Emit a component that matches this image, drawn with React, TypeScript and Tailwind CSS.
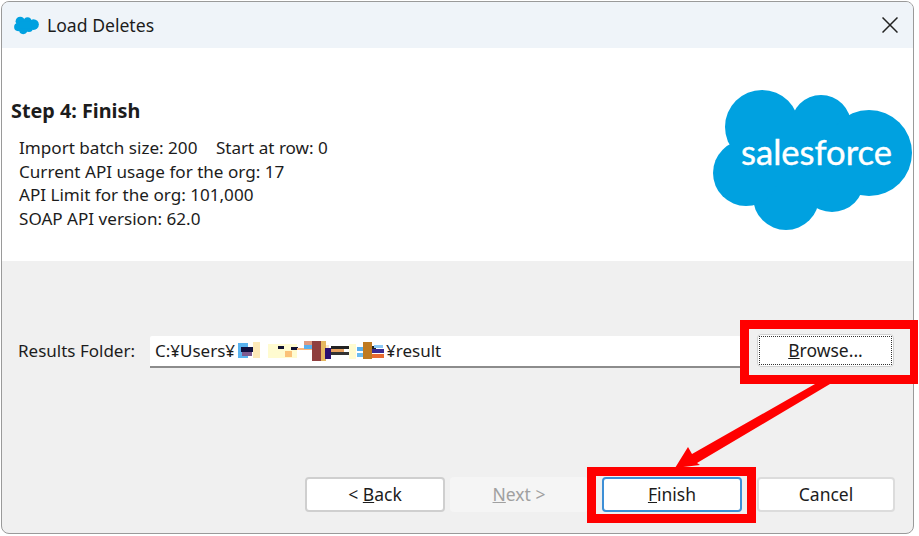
const font = { fontFamily: '"Noto Sans", "Open Sans", sans-serif' };

function Cloud({ className, children }: { className: string; children?: React.ReactNode }) {
  return (
    <svg viewBox="713 90 201 141" className={className}>
      <g fill="#00a1e0">
        <circle cx="763" cy="127" r="37" />
        <circle cx="822" cy="125" r="30" />
        <circle cx="870" cy="153" r="43" />
        <circle cx="833" cy="180" r="32" />
        <circle cx="787" cy="197" r="33" />
        <circle cx="747" cy="173" r="33" />
        <rect x="755" y="125" width="100" height="60" />
      </g>
      {children}
    </svg>
  );
}

function Btn({ children, cls }: { children: React.ReactNode; cls: string }) {
  return (
    <div className={`h-[35px] flex items-center justify-center rounded-[4px] text-[17.5px] ${cls}`}>{children}</div>
  );
}

const mosaic: [number, number, number, number, string][] = [
  [0, 3, 10, 15, "#59b3f0"], [3, 7, 12, 5, "#101040"], [15, 2, 7, 16, "#fde9b8"], [4, 12, 10, 4, "#7c5a90"],
  [30, 4, 29, 14, "#fffbd0"], [40, 6, 6, 3, "#101030"], [47, 11, 7, 6, "#fbc27a"], [53, 7, 7, 3, "#101030"], [59, 8, 15, 2, "#fbb87c"],
  [66, 1, 20, 4, "#e09a80"], [66, 5, 8, 4, "#5ab0ee"], [74, 1, 9, 20, "#8f3f3f"], [83, 1, 5, 20, "#e6b860"], [88, 5, 3, 14, "#fbe8c8"],
  [87, 8, 6, 11, "#2a1070"], [93, 6, 18, 3, "#222"], [93, 9, 13, 3, "#e8a060"], [93, 12, 18, 3, "#333"], [111, 4, 7, 15, "#fffbd0"],
  [119, 7, 9, 4, "#5ab0ee"], [119, 13, 9, 4, "#6cbcf0"], [125, 2, 9, 17, "#c07a20"], [134, 6, 4, 3, "#222"], [134, 9, 12, 4, "#3a2a90"], [134, 14, 12, 4, "#e86a30"], [136, 5, 9, 3, "#8cc8f5"],
];

export default function App() {
  return (
    <div className="relative w-[919px] h-[536px] bg-white overflow-hidden text-[#1c1c1c]" style={font}>
      <div className="ml-px mt-px w-[913px] h-[533px] rounded-[8px] border border-[#9a9a9a] bg-[#f0f0f0] overflow-hidden flex flex-col">
        <div className="h-[46px] shrink-0 bg-[#eff4f9] flex items-center pl-[12px] pr-[15px]">
          <Cloud className="w-[25px] h-[19px]" />
          <span className="ml-[8px] text-[17.6px]">Load Deletes</span>
          <svg viewBox="0 0 16 16" className="ml-auto w-[16px] h-[16px]" fill="none" stroke="#222" strokeWidth="1.5">
            <path d="M0.5 0.5L15.5 15.5M15.5 0.5L0.5 15.5" />
          </svg>
        </div>
        <div className="h-[213px] shrink-0 bg-white flex justify-between">
          <div className="pl-[9px] pt-[49px]">
            <div className="font-bold text-[19.8px] leading-[28px]">Step 4: Finish</div>
            <div className="mt-[11px] pl-[8px] text-[17.1px] leading-[23.6px]">
              <div>Import batch size: 200 <span className="ml-[14px]">Start at row: 0</span></div>
              <div>Current API usage for the org: 17</div>
              <div>API Limit for the org: 101,000</div>
              <div>SOAP API version: 62.0</div>
            </div>
          </div>
          <Cloud className="w-[201px] h-[141px] mt-[42px] shrink-0">
            <text x="742" y="165" fill="#fff" stroke="#fff" strokeWidth="0.4" fontSize="34" fontFamily="Lato, sans-serif" textLength="151" lengthAdjust="spacingAndGlyphs">
              salesforce
            </text>
          </Cloud>
        </div>
        <div className="flex-1 flex flex-col pr-[18px] pl-[16px]">
          <div className="mt-[73px] h-[33px] flex items-center">
            <span className="w-[132px] text-[17px] mt-[1px]">Results Folder:</span>
            <div className="mt-[2px] w-[591px] h-[32px] bg-white border-b-2 border-[#8c8c8c] flex items-center pl-[5px] text-[17px] rounded-t-[2px]">
              <span className="mt-[1px]">C:¥Users¥</span>
              <svg viewBox="0 0 146 21" className="ml-[1px] w-[150px] h-[21px] shrink-0">
                {mosaic.map(([x, y, w, h, c], i) => (
                  <rect key={i} x={x} y={y} width={w} height={h} fill={c} />
                ))}
              </svg>
              <span className="mt-[1px]">¥result</span>
            </div>
            <div className="ml-[16px] h-[33px] w-[137px] rounded-[4px] bg-white border border-[#d0d0d0] p-px text-[17.5px]">
              <div className="h-full flex items-center justify-center border border-dotted border-[#333]">
                <span><u>B</u>rowse...</span>
              </div>
            </div>
          </div>
          <div className="mt-[110px] flex">
            <Btn cls="ml-[287px] w-[140px] bg-white border-2 border-[#cfcfcf]"><span>&lt; <u>B</u>ack</span></Btn>
            <Btn cls="ml-[5px] w-[138px] bg-[#f5f5f5] text-[#a0a0a0]"><span><u>N</u>ext &gt;</span></Btn>
            <Btn cls="ml-[14px] w-[140px] bg-white border-2 border-[#3d8fd6]"><span><u>F</u>inish</span></Btn>
            <Btn cls="ml-[15px] w-[138px] bg-white border-2 border-[#dcdcdc]"><span>Cancel</span></Btn>
          </div>
        </div>
      </div>
      <div className="absolute left-[740px] top-[320px] w-[178px] h-[64px] border-[9px] border-r-[8px] border-[#ff0000]" />
      <div className="absolute left-[587px] top-[467px] w-[169px] h-[56px] border-[9px] border-[#ff0000]" />
      <svg className="absolute left-0 top-0 w-[919px] h-[536px] pointer-events-none" viewBox="0 0 919 536">
        <polygon points="815,384 830,384 697,463 700,465 675,468 688,447 692,454" fill="#ff0000" />
      </svg>
    </div>
  );
}
